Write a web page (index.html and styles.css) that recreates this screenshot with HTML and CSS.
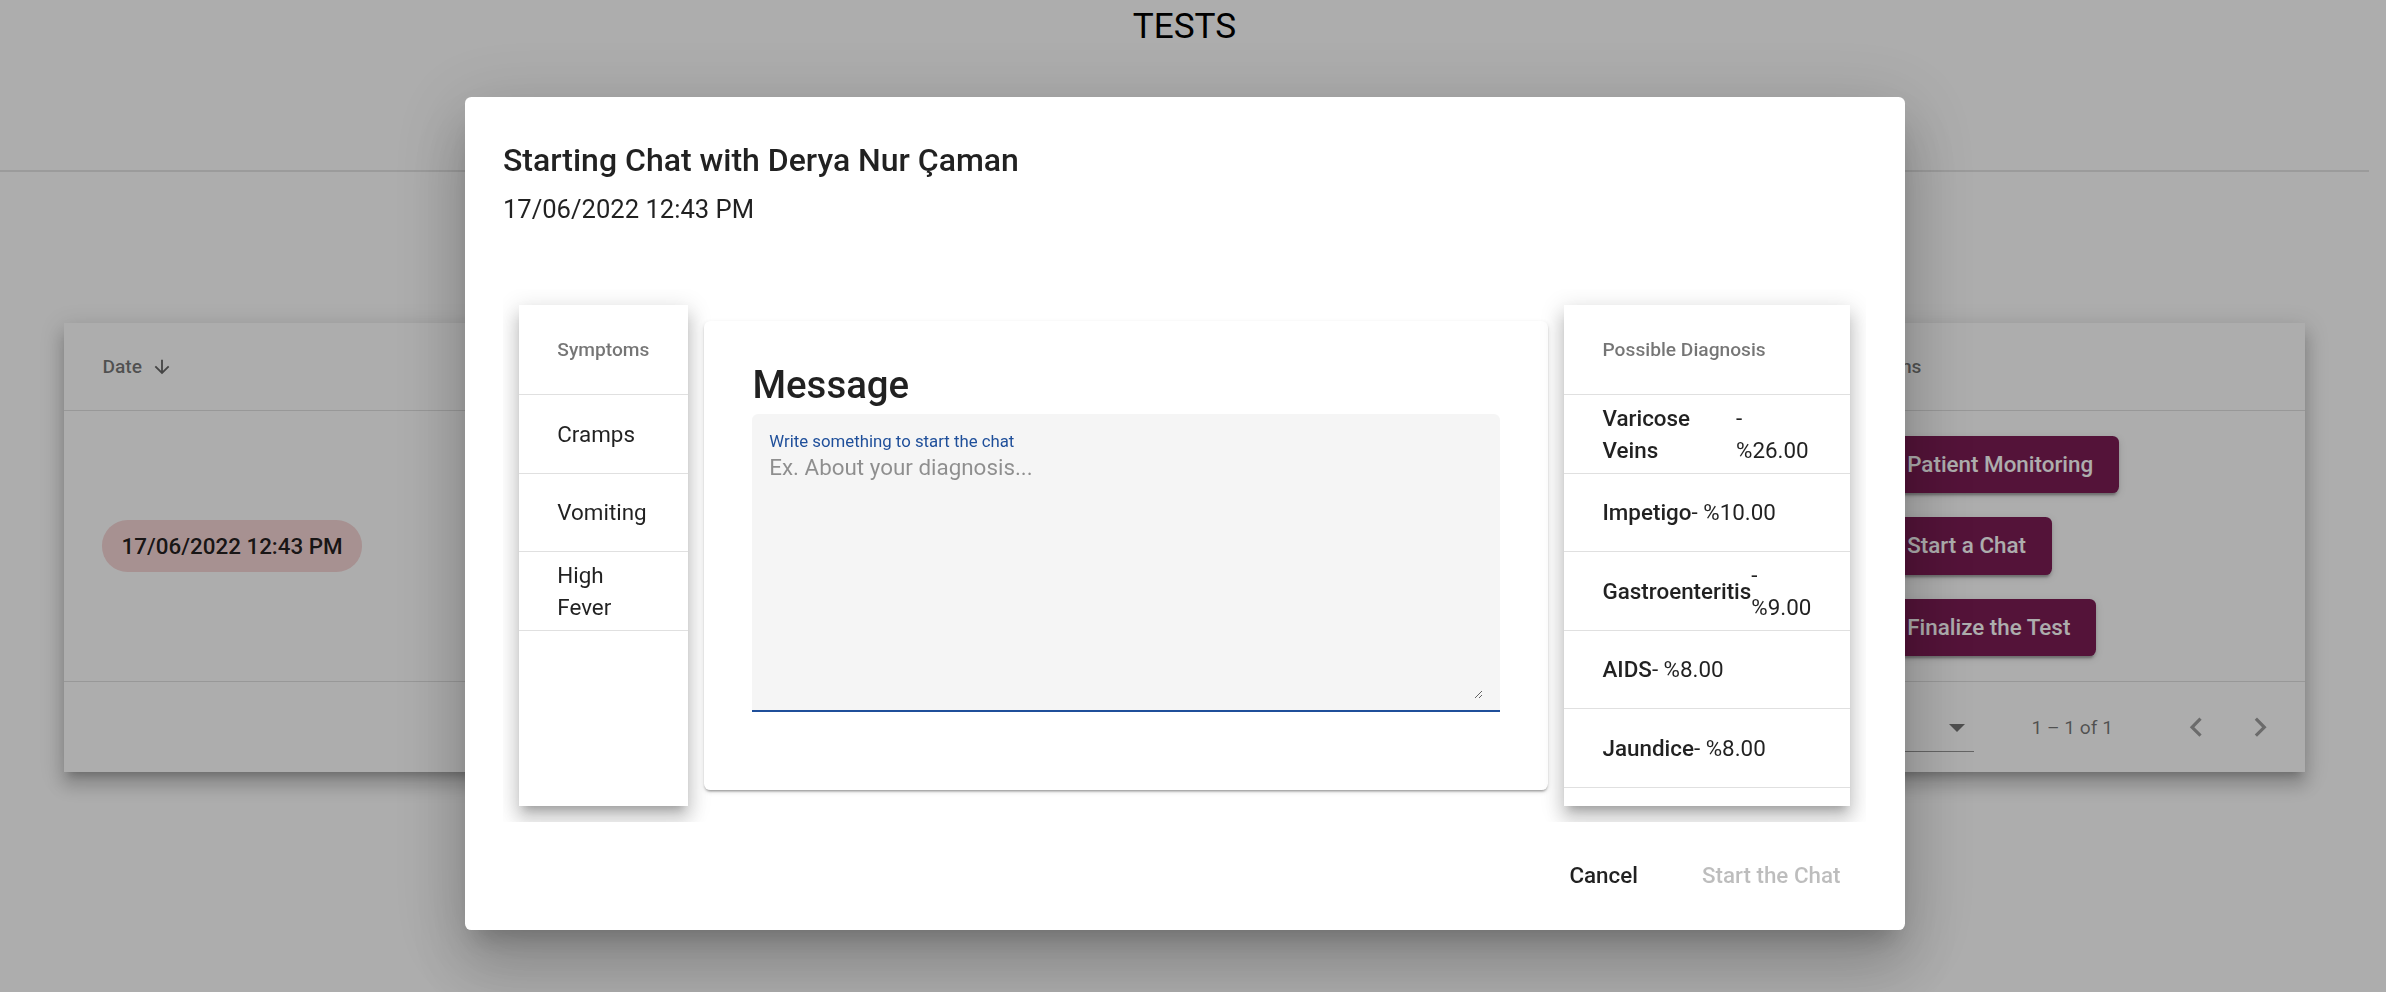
FILE: index.html
```html
<!DOCTYPE html>
<html lang="en">
<head>
<meta charset="utf-8">
<title>Tests</title>
<link rel="stylesheet" href="styles.css">
</head>
<body>
<div class="page">
  <header class="page-header">
    <h1 class="page-title">TESTS</h1>
  </header>
  <main class="main">
    <section class="table-card">
      <div class="t-row t-head">
        <div class="t-cell c-date">
          <span class="head-label">Date</span>
          <svg class="sort-arrow" viewBox="0 0 24 24"><path d="M20 12l-1.41-1.41L13 16.17V4h-2v12.17l-5.58-5.59L4 12l8 8 8-8z"/></svg>
        </div>
        <div class="t-cell c-actions"><span class="head-label">Actions</span></div>
      </div>
      <div class="t-row t-body">
        <div class="t-cell c-date"><span class="chip">17/06/2022 12:43 PM</span></div>
        <div class="t-cell c-actions">
          <div class="btn-col">
            <button class="raised">Patient Monitoring</button>
            <button class="raised">Start a Chat</button>
            <button class="raised">Finalize the Test</button>
          </div>
        </div>
      </div>
      <div class="paginator">
        <span class="pg-label">Items per page:</span>
        <div class="pg-select"><span class="pg-value">10</span><span class="pg-arrow"></span></div>
        <span class="pg-range">1 – 1 of 1</span>
        <button class="pg-btn" aria-label="Previous page"><svg viewBox="0 0 24 24"><path d="M15.41 7.41L14 6l-6 6 6 6 1.41-1.41L10.83 12z"/></svg></button>
        <button class="pg-btn" aria-label="Next page"><svg viewBox="0 0 24 24"><path d="M10 6L8.59 7.41 13.17 12l-4.58 4.59L10 18l6-6z"/></svg></button>
      </div>
    </section>
  </main>
</div>

<div class="backdrop"></div>

<div class="overlay-pane">
  <div class="dialog">
    <h2 class="dlg-title">Starting Chat with Derya Nur Çaman</h2>
    <p class="dlg-date">17/06/2022 12:43 PM</p>
    <div class="dlg-content">
      <div class="list-card symptoms">
        <div class="list-head">Symptoms</div>
        <div class="list-row">Cramps</div>
        <div class="list-row">Vomiting</div>
        <div class="list-row">High Fever</div>
      </div>
      <div class="msg-card">
        <h2 class="msg-title">Message</h2>
        <div class="field">
          <label class="field-label" for="msg">Write something to start the chat</label>
          <textarea id="msg" placeholder="Ex. About your diagnosis..." autofocus></textarea>
        </div>
      </div>
      <div class="list-card diagnosis">
        <div class="list-head">Possible Diagnosis</div>
        <div class="list-row"><span class="dx-name">Varicose Veins</span><span class="dx-pct">- %26.00</span></div>
        <div class="list-row"><span class="dx-name">Impetigo</span><span class="dx-pct">- %10.00</span></div>
        <div class="list-row"><span class="dx-name">Gastroenteritis</span><span class="dx-pct">- %9.00</span></div>
        <div class="list-row"><span class="dx-name">AIDS</span><span class="dx-pct">- %8.00</span></div>
        <div class="list-row"><span class="dx-name">Jaundice</span><span class="dx-pct">- %8.00</span></div>
      </div>
    </div>
    <div class="dlg-actions">
      <button class="text-btn">Cancel</button>
      <button class="text-btn" disabled>Start the Chat</button>
    </div>
  </div>
</div>
</body>
</html>
```

FILE: styles.css
```css
* { box-sizing: border-box; }

html, body {
  margin: 0;
  padding: 0;
}

body {
  width: 2386px;
  height: 992px;
  overflow: hidden;
  background: #ffffff;
  color: rgba(0, 0, 0, 0.87);
  font-family: Roboto, "Noto Sans", "Liberation Sans", sans-serif;
}

button { font-family: inherit; }

/* ---------- background page ---------- */
.page {
  padding-right: 17px;
}

.page-header {
  height: 172px;
  border-bottom: 2px solid rgba(0, 0, 0, 0.1);
  text-align: center;
}

.page-title {
  margin: 0;
  padding-top: 5px;
  font-size: 35.2px;
  font-weight: 400;
  line-height: normal;
  color: #000;
}

.main {
  padding: 151px 64px 0;
}

.table-card {
  background: #fff;
  box-shadow: 0 8px 8px -5px rgba(0, 0, 0, 0.2),
              0 13px 16px 2px rgba(0, 0, 0, 0.14),
              0 5px 22px 3px rgba(0, 0, 0, 0.12);
}

.t-row {
  display: flex;
  border-bottom: 1px solid rgba(0, 0, 0, 0.12);
}

.t-head { height: 88px; }
.t-body { height: 271px; }

.t-cell {
  display: flex;
  align-items: center;
}

.c-date {
  flex: 1;
  padding-left: 38.4px;
}

.c-actions {
  width: 449px;
  padding-right: 38.4px;
}

.head-label {
  font-size: 19.2px;
  font-weight: 500;
  color: rgba(0, 0, 0, 0.54);
}

.sort-arrow {
  width: 22px;
  height: 22px;
  margin-left: 9px;
  fill: rgba(0, 0, 0, 0.6);
}

.chip {
  display: inline-flex;
  align-items: center;
  height: 51.2px;
  padding: 0 19.2px;
  border-radius: 25.6px;
  background: #f7d6d6;
  font-size: 22.4px;
  font-weight: 500;
  color: rgba(0, 0, 0, 0.87);
}

.btn-col {
  display: flex;
  flex-direction: column;
  align-items: flex-start;
  gap: 24px;
  margin-left: 25.6px;
}

.raised {
  border: 0;
  padding: 0 25.6px;
  height: 57.6px;
  line-height: 57.6px;
  border-radius: 6.4px;
  background: #7c1c54;
  color: #fff;
  font-size: 22.4px;
  font-weight: 500;
  box-shadow: 0 5px 2px -3px rgba(0, 0, 0, 0.2),
              0 3px 3px 0 rgba(0, 0, 0, 0.14),
              0 2px 8px 0 rgba(0, 0, 0, 0.12);
}

.paginator {
  height: 90px;
  display: flex;
  align-items: center;
  justify-content: flex-end;
  padding: 0 12.8px;
  color: rgba(0, 0, 0, 0.54);
  font-size: 19.2px;
}

.pg-label {
  margin-right: 6.4px;
}

.pg-select {
  width: 115px;
  height: 40px;
  margin: 9.6px 19.2px 0 6.4px;
  display: flex;
  align-items: center;
  justify-content: space-between;
  border-bottom: 1.6px solid rgba(0, 0, 0, 0.42);
  color: rgba(0, 0, 0, 0.87);
  align-self: auto;
}

.pg-value { padding-bottom: 2px; }

.pg-arrow {
  width: 0;
  height: 0;
  margin-right: 9px;
  margin-top: -6px;
  border-left: 8px solid transparent;
  border-right: 8px solid transparent;
  border-top: 8px solid rgba(0, 0, 0, 0.54);
}

.pg-range {
  margin: 0 51.2px 0 38.4px;
}

.pg-btn {
  width: 64px;
  height: 64px;
  padding: 0;
  border: 0;
  background: transparent;
  display: flex;
  align-items: center;
  justify-content: center;
}

.pg-btn svg {
  width: 38.4px;
  height: 38.4px;
  fill: rgba(0, 0, 0, 0.38);
}

/* ---------- overlay + dialog ---------- */
.backdrop {
  position: fixed;
  inset: 0;
  background: rgba(0, 0, 0, 0.32);
}

.overlay-pane {
  position: fixed;
  inset: 0;
  display: flex;
  justify-content: center;
  align-items: flex-start;
  padding: 97px 17px 0 0;
}

.dialog {
  width: 1440px;
  height: 833px;
  padding: 38.4px 38.4px 12.4px;
  background: #fff;
  border-radius: 6.4px;
  display: flex;
  flex-direction: column;
  box-shadow: 0 18px 24px -11px rgba(0, 0, 0, 0.2),
              0 38px 61px 5px rgba(0, 0, 0, 0.14),
              0 14px 74px 13px rgba(0, 0, 0, 0.12);
}

.dlg-title {
  margin: 0;
  font-size: 32px;
  font-weight: 500;
  line-height: 51.2px;
  color: rgba(0, 0, 0, 0.87);
}

.dlg-date {
  margin: 3.5px 0 0;
  font-size: 25.6px;
  line-height: 38.4px;
  color: rgba(0, 0, 0, 0.87);
}

.dlg-content {
  margin-top: 60.6px;
  height: 533px;
  padding: 16px;
  display: flex;
  align-items: center;
  gap: 16px;
  overflow: hidden;
}

.list-card {
  flex: none;
  height: 501px;
  background: #fff;
  overflow: hidden;
  box-shadow: 0 8px 8px -5px rgba(0, 0, 0, 0.2),
              0 13px 16px 2px rgba(0, 0, 0, 0.14),
              0 5px 22px 3px rgba(0, 0, 0, 0.12);
}

.symptoms { width: 169.6px; }
.diagnosis { width: 286px; }

.list-head {
  height: 90px;
  padding: 0 38.4px;
  display: flex;
  align-items: center;
  border-bottom: 1px solid rgba(0, 0, 0, 0.12);
  font-size: 19.2px;
  font-weight: 500;
  color: rgba(0, 0, 0, 0.54);
}

.list-row {
  min-height: 78.5px;
  padding: 0 38.4px;
  display: flex;
  align-items: center;
  border-bottom: 1px solid rgba(0, 0, 0, 0.12);
  font-size: 22.4px;
  line-height: 32px;
  color: rgba(0, 0, 0, 0.87);
}

.dx-name { font-weight: 500; }

.msg-card {
  flex: 1;
  padding: 37.3px 48px 48px;
  background: #fff;
  border-radius: 6.4px;
  box-shadow: 0 3px 2px -2px rgba(0, 0, 0, 0.2),
              0 2px 2px 0 rgba(0, 0, 0, 0.14),
              0 2px 5px 0 rgba(0, 0, 0, 0.12);
}

.msg-title {
  margin: 0 0 4.5px;
  font-size: 38.4px;
  font-weight: 500;
  line-height: 51.2px;
  color: rgba(0, 0, 0, 0.87);
}

.field {
  margin-bottom: 30px;
  padding: 17.5px 16.8px 11px;
  background: #f5f5f5;
  border-radius: 6.4px 6.4px 0 0;
  border-bottom: 2px solid #1f4f9a;
}

.field-label {
  display: block;
  margin-bottom: 4px;
  font-size: 16.8px;
  line-height: 18.9px;
  color: #1f4f9a;
}

.field textarea {
  display: block;
  width: 100%;
  height: 244px;
  margin: 0;
  padding: 0;
  border: 0;
  outline: none;
  background: transparent;
  resize: vertical;
  font-family: Roboto, "Noto Sans", sans-serif;
  font-size: 22.4px;
  line-height: 25.2px;
  color: rgba(0, 0, 0, 0.87);
  caret-color: #1f4f9a;
}

.field textarea::placeholder {
  color: rgba(0, 0, 0, 0.42);
}

.dlg-actions {
  margin-top: 12.4px;
  min-height: 83.2px;
  padding: 12.8px 0;
  display: flex;
  justify-content: flex-end;
  align-items: center;
}

.text-btn {
  min-width: 102.4px;
  height: 57.6px;
  padding: 0 25.6px;
  border: 0;
  border-radius: 6.4px;
  background: transparent;
  font-size: 22.4px;
  font-weight: 500;
  line-height: 57.6px;
  color: rgba(0, 0, 0, 0.87);
}

.text-btn + .text-btn { margin-left: 12.8px; }

.text-btn:disabled { color: rgba(0, 0, 0, 0.26); }
```
